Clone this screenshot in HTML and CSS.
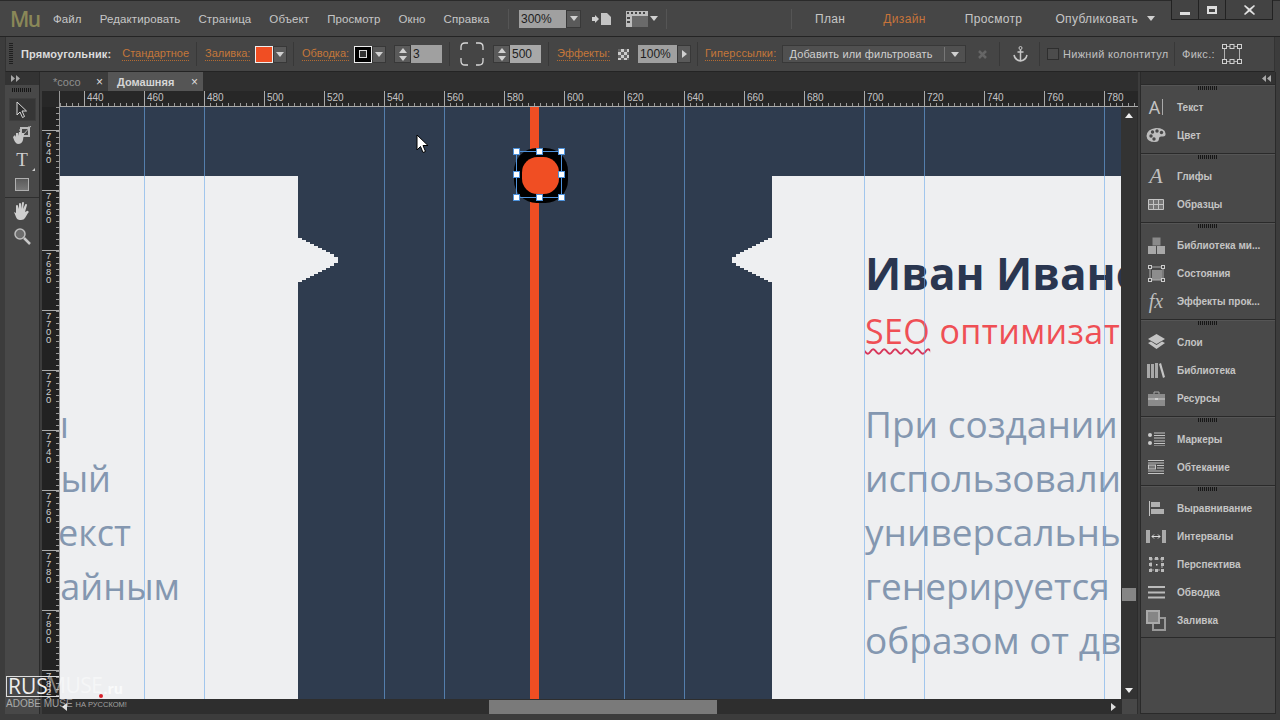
FILE: index.html
```html
<!DOCTYPE html>
<html lang="ru">
<head>
    <meta charset="UTF-8">
    <title>Adobe Muse</title>
    <link rel="stylesheet" href="styles.css">
</head>
<body>
<div class="app">
    <div class="menubar">
        <div class="logo">Mu</div>
        <nav class="menu">
            <span>Файл</span><span>Редактировать</span><span>Страница</span><span>Объект</span><span>Просмотр</span><span>Окно</span><span>Справка</span>
        </nav>
        <div class="sep sep-zoom"></div>
        <div class="field zoom-field">300%</div>
        <div class="drop"><i class="tri"></i></div>
        <svg class="ico page-ico" width="20" height="14" viewBox="0 0 20 14"><path d="M0 5h3V3l4 4-4 4V9H0z" fill="#d0d0d0"/><path d="M9 1h6l4 4v8H9z" fill="#c4c4c4"/></svg>
        <svg class="ico film-ico" width="22" height="16" viewBox="0 0 22 16"><rect width="22" height="16" fill="#bdbdbd"/><rect x="6" y="5" width="16" height="11" fill="#6a6a6a"/><path d="M1 1h2v2H1zM5 1h2v2H5zM9 1h2v2H9zM13 1h2v2h-2zM17 1h2v2h-2zM1 6h3v2H1zM1 10h3v2H1z" fill="#444"/></svg>
        <i class="tri tri-film"></i>
        <div class="sep sep-a"></div>
        <div class="sep sep-b"></div>
        <nav class="modes">
            <span class="mode-plan">План</span><span class="mode-design">Дизайн</span><span class="mode-view">Просмотр</span><span class="mode-pub">Опубликовать</span>
        </nav>
        <i class="tri tri-pub"></i>
        <div class="winbtns">
            <div class="winbtn"><i class="win-min"></i></div>
            <div class="winbtn"><i class="win-max"></i></div>
            <div class="winbtn winbtn-close">
                <svg width="11" height="10" viewBox="0 0 11 10"><path d="M1 0l4.500 3.500L10 0l1 1-4 4 4 4-1 1-4.500-3.500L1 10 0 9l4-4-4-4z" fill="#e0e0e0"/></svg>
            </div>
        </div>
    </div>

    <div class="controlbar">
        <div class="cgroup cg-1">
            <div class="grip-v"></div>
            <b class="ctl-title">Прямоугольник:</b>
            <span class="link">Стандартное</span>
        </div>
        <div class="cgroup cg-2">
            <span class="link">Заливка:</span>
            <div class="swatch swatch-fill"></div>
            <div class="drop small"><i class="tri"></i></div>
        </div>
        <div class="cgroup cg-3">
            <span class="link">Обводка:</span>
            <div class="swatch swatch-stroke"><i></i></div>
            <div class="drop small"><i class="tri"></i></div>
            <div class="stepper"><i class="tri tri-up"></i><i class="tri"></i></div>
            <div class="field stroke-field">3</div>
        </div>
        <div class="cgroup cg-4">
            <svg class="corners" width="24" height="24" viewBox="0 0 24 24"><path d="M1 8V5q0-4 4-4h3M16 1h3q4 0 4 4v3M23 16v3q0 4-4 4h-3M8 23H5q-4 0-4-4v-3" fill="none" stroke="#d8d8d8" stroke-width="1.300"/></svg>
            <div class="stepper"><i class="tri tri-up"></i><i class="tri"></i></div>
            <div class="field radius-field">500</div>
        </div>
        <div class="cgroup cg-5">
            <span class="link">Эффекты:</span>
            <div class="checker"></div>
            <div class="field opacity-field">100%</div>
            <div class="drop small arrow-right"><i class="tri tri-right"></i></div>
        </div>
        <div class="cgroup cg-6">
            <span class="link">Гиперссылки:</span>
            <div class="select"><span>Добавить или фильтровать</span><i class="select-bar"></i><i class="tri"></i></div>
            <svg class="clear-x" width="9" height="9" viewBox="0 0 9 9"><path d="M1 1l7 7M8 1L1 8" stroke="#666" stroke-width="2.500"/></svg>
        </div>
        <div class="cgroup cg-7">
            <svg width="15" height="16" viewBox="0 0 15 16"><circle cx="7.500" cy="2" r="1.500" fill="none" stroke="#c8c8c8"/><path d="M7.500 3.500V15M4.500 6h6M1 9q1 5 6.500 6Q13 14 14 9" fill="none" stroke="#c8c8c8" stroke-width="1.500"/></svg>
        </div>
        <div class="cgroup cg-8">
            <div class="checkbox"></div>
            <span class="ctl-text">Нижний колонтитул</span>
        </div>
        <div class="cgroup cg-9">
            <span class="ctl-text">Фикс.:</span>
            <svg class="pin-ico" width="20" height="20" viewBox="0 0 20 20"><path d="M2.500 2.500h15M2.500 17.500h15M2.500 2.500v15M17.500 2.500v15" stroke="#b0b0b0" fill="none"/><g fill="#444" stroke="#d0d0d0"><rect x=".5" y=".5" width="4" height="4"/><rect x="8" y=".5" width="4" height="4"/><rect x="15.500" y=".5" width="4" height="4"/><rect x=".5" y="15.500" width="4" height="4"/><rect x="8" y="15.500" width="4" height="4"/><rect x="15.500" y="15.500" width="4" height="4"/></g></svg>
        </div>
    </div>

    <div class="workspace">
        <aside class="toolbar">
            <div class="strip strip-left">
                <svg width="9" height="7" viewBox="0 0 9 7"><path d="M0 0l4 3.500L0 7zM5 0l4 3.500L5 7z" fill="#a8a8a8"/></svg>
            </div>
            <div class="grip-h"></div>
            <div class="tool tool-active">
                <svg width="12" height="18" viewBox="0 0 12 18"><path d="M1 1v13l3-3 2.500 5.500 2-1L6 10h4.500z" fill="#2c2c2c" stroke="#d8d8d8"/></svg>
            </div>
            <div class="tool">
                <svg width="20" height="20" viewBox="0 0 20 20"><path d="M9 3h8v8H9z" fill="none" stroke="#bbb" stroke-width="2"/><path d="M7 5h2M17 1v2M19 1l-8 9" stroke="#bbb"/><path d="M1 12l2-2 1 2 0-4 2 0 0 3 1-4 2 0 0 4 1-3 2 0-1 7q-1 4-5 4-3 0-5-7z" fill="#c8c8c8"/></svg>
            </div>
            <div class="tool tool-t"><span>T</span><i class="corner-mark"></i></div>
            <div class="tool"><div class="tool-rect"></div></div>
            <div class="tool-sep"></div>
            <div class="tool">
                <svg width="18" height="18" viewBox="0 0 18 18"><path d="M3 2v0M1 10l2 1 0-7a1 1 0 012 0l1 3V2a1 1 0 012 0v5l1-6a1 1 0 012 0l-1 6 2-4a1 1 0 012 0l-2 7 2-1a1 1 0 011 2l-3 5q-1 2-4 2H7q-3 0-4-3z" fill="#cfcfcf"/></svg>
            </div>
            <div class="tool">
                <svg width="18" height="18" viewBox="0 0 18 18"><circle cx="7" cy="7" r="5" fill="#6d6d6d" stroke="#bdbdbd" stroke-width="1.500"/><path d="M11 11l6 6" stroke="#c8c8c8" stroke-width="2.500"/></svg>
            </div>
        </aside>

        <main class="doc">
            <div class="tabs">
                <div class="tab tab-coco"><span>*coco</span><i class="tab-x">×</i></div>
                <div class="tab tab-home"><b>Домашняя</b><i class="tab-x">×</i></div>
            </div>
            <div class="ruler-row">
                <div class="ruler-corner"></div>
                <div class="ruler-top">
                    <span>440</span><span>460</span><span>480</span><span>500</span><span>520</span><span>540</span><span>560</span><span>580</span><span>600</span><span>620</span><span>640</span><span>660</span><span>680</span><span>700</span><span>720</span><span>740</span><span>760</span><span>780</span>
                </div>
            </div>
            <div class="canvas-row">
                <div class="ruler-left">
                    <span>7640</span><span>7660</span><span>7680</span><span>7700</span><span>7720</span><span>7740</span><span>7760</span><span>7780</span><span>7800</span><span>7820</span>
                </div>
                <div class="canvas">
                    <div class="card card-left">
                        <div class="old-line w-1">ы</div>
                        <div class="old-line w-2">ный</div>
                        <div class="old-line w-3">текст</div>
                        <div class="old-line w-4">случайным</div>
                    </div>
                    <div class="card card-right">
                        <h1>Иван Иванов</h1>
                        <h2><span class="misspelt">SEO</span> оптимизатор</h2>
                        <p>При создании</p>
                        <p>использовали</p>
                        <p>универсальный</p>
                        <p>генерируется</p>
                        <p>образом от двух</p>
                    </div>
                    <div class="notch notch-left"></div>
                    <div class="notch notch-right"></div>
                    <div class="orange-bar"></div>

                    <i class="guide" style="left:84px"></i>
                    <i class="guide" style="left:144px"></i>
                    <i class="guide" style="left:324px"></i>
                    <i class="guide" style="left:384px"></i>
                    <i class="guide" style="left:564px"></i>
                    <i class="guide" style="left:624px"></i>
                    <i class="guide" style="left:804px"></i>
                    <i class="guide" style="left:864px"></i>
                    <i class="guide" style="left:1044px"></i>

                    <div class="node">
                        <div class="node-dot"></div>
                        <div class="sel-box">
                            <i class="h h-tl"></i><i class="h h-tc"></i><i class="h h-tr"></i>
                            <i class="h h-ml"></i><i class="h h-mr"></i>
                            <i class="h h-bl"></i><i class="h h-bc"></i><i class="h h-br"></i>
                        </div>
                    </div>
                    <svg class="cursor" width="13" height="20" viewBox="0 0 13 20"><path d="M1 1v15l3.500-3.500 2.500 6 2.500-1-2.500-6H12z" fill="#fff" stroke="#000"/></svg>
                </div>
                <div class="vscroll">
                    <i class="tri tri-up white"></i>
                    <div class="vthumb"></div>
                    <i class="tri white"></i>
                </div>
            </div>
            <div class="hscroll">
                <i class="tri tri-left white"></i>
                <div class="hthumb"></div>
                <i class="tri tri-right white"></i>
                <div class="scroll-corner"></div>
            </div>
        </main>

        <aside class="panels">
            <div class="strip strip-right">
                <svg width="9" height="7" viewBox="0 0 9 7"><path d="M4 0L0 3.500 4 7zM9 0L5 3.500 9 7z" fill="#a8a8a8"/></svg>
            </div>
            <section class="pgroup">
                <div class="grip-h"></div>
                <div class="pitem"><div class="pico"><span class="ico-a">A</span><i class="ico-caret"></i></div><span>Текст</span></div>
                <div class="pitem"><div class="pico"><svg width="20" height="16" viewBox="0 0 20 16"><path d="M10 1q9 0 9.500 5.500Q20 10 16 9.500 13 9 13 11.500 13 15 9 15 1 15 .5 9 1 2 10 1z" fill="#bdbdbd"/><g fill="#484848"><circle cx="5" cy="9" r="1.700"/><circle cx="6.500" cy="5" r="1.700"/><circle cx="11" cy="4" r="1.700"/><circle cx="15.500" cy="5.500" r="1.700"/><circle cx="8" cy="12" r="1.700"/></g></svg></div><span>Цвет</span></div>
            </section>
            <section class="pgroup">
                <div class="grip-h"></div>
                <div class="pitem"><div class="pico"><span class="ico-glyph">A</span></div><span>Глифы</span></div>
                <div class="pitem"><div class="pico"><svg width="16" height="11" viewBox="0 0 16 11"><path d="M.5.500h15v10H.500zM.5 5.500h15M5.500.500v10M10.500.500v10" fill="#777" stroke="#c4c4c4"/></svg></div><span>Образцы</span></div>
            </section>
            <section class="pgroup">
                <div class="grip-h"></div>
                <div class="pitem"><div class="pico"><svg width="17" height="17" viewBox="0 0 17 17"><path d="M4.500.500h8v8h-8z" fill="#8a8a8a"/><path d="M0 9h8v8H0zM9 9h8v8H9z" fill="#a8a8a8"/></svg></div><span>Библиотека ми...</span></div>
                <div class="pitem"><div class="pico"><svg width="17" height="17" viewBox="0 0 17 17"><rect x="4" y="5" width="10" height="10" fill="#8d8d8d"/><path d="M2 2h13v13H2z" fill="none" stroke="#aaa"/><g fill="#484848" stroke="#ccc"><rect x=".5" y=".5" width="3" height="3"/><rect x="13.500" y=".5" width="3" height="3"/><rect x=".5" y="13.500" width="3" height="3"/><rect x="13.500" y="13.500" width="3" height="3"/></g></svg></div><span>Состояния</span></div>
                <div class="pitem"><div class="pico"><span class="ico-fx">fx</span></div><span>Эффекты прок...</span></div>
            </section>
            <section class="pgroup">
                <div class="grip-h"></div>
                <div class="pitem"><div class="pico"><svg width="17" height="16" viewBox="0 0 17 16"><path d="M8.500 0L17 5l-8.500 5L0 5z" fill="#c4c4c4"/><path d="M0 9l3-1.500 5.500 3.500L14 7.500 17 9l-8.500 6z" fill="#c4c4c4"/></svg></div><span>Слои</span></div>
                <div class="pitem"><div class="pico"><svg width="18" height="15" viewBox="0 0 18 15"><path d="M0 1h3v14H0zM4 1h3v14H4zM8 0h3v15H8z" fill="#a8a8a8"/><path d="M12 1l2-1 4 14-2 1z" fill="#c4c4c4"/></svg></div><span>Библиотека</span></div>
                <div class="pitem"><div class="pico"><svg width="17" height="15" viewBox="0 0 17 15"><path d="M6 3V1h5v2" fill="none" stroke="#aaa"/><rect y="3" width="17" height="12" fill="#8b8b8b"/><path d="M0 8h17" stroke="#ccc"/><rect x="7" y="7" width="3" height="2" fill="#ccc"/></svg></div><span>Ресурсы</span></div>
            </section>
            <section class="pgroup">
                <div class="grip-h"></div>
                <div class="pitem"><div class="pico"><svg width="17" height="14" viewBox="0 0 17 14"><circle cx="2" cy="3" r="2" fill="#ccc"/><circle cx="2" cy="11" r="2" fill="#ccc"/><path d="M6 1h11M6 3.500h11M6 6h11M6 9h11M6 11.500h11M6 14h11" stroke="#c4c4c4"/></svg></div><span>Маркеры</span></div>
                <div class="pitem"><div class="pico"><svg width="16" height="14" viewBox="0 0 16 14"><path d="M0 .5h16M0 3h16M9 5.500h7M9 8h7M0 11h16M0 13.500h16" stroke="#c4c4c4"/><rect x=".5" y="5" width="7" height="4" fill="#777" stroke="#c4c4c4"/></svg></div><span>Обтекание</span></div>
            </section>
            <section class="pgroup">
                <div class="grip-h"></div>
                <div class="pitem"><div class="pico"><svg width="15" height="15" viewBox="0 0 15 15"><path d="M.5 0v15" stroke="#c4c4c4"/><rect x="2" y="1" width="9" height="5" fill="#b0b0b0"/><rect x="2" y="8" width="13" height="5" fill="#b0b0b0"/></svg></div><span>Выравнивание</span></div>
                <div class="pitem"><div class="pico"><svg width="20" height="13" viewBox="0 0 20 13"><rect width="4" height="13" fill="#aaa"/><rect x="16" width="4" height="13" fill="#aaa"/><path d="M6 6.500h8M6 6.500l2-2M6 6.500l2 2M14 6.500l-2-2M14 6.500l-2 2" stroke="#ddd" fill="none"/></svg></div><span>Интервалы</span></div>
                <div class="pitem"><div class="pico"><svg width="15" height="15" viewBox="0 0 15 15"><rect x="2" y="2" width="11" height="11" fill="none" stroke="#aaa" stroke-dasharray="2 1"/><g fill="#bbb"><rect width="3" height="3"/><rect x="12" width="3" height="3"/><rect y="12" width="3" height="3"/><rect x="12" y="12" width="3" height="3"/><rect x="6" width="3" height="3"/><rect x="6" y="12" width="3" height="3"/><rect y="6" width="3" height="3"/><rect x="12" y="6" width="3" height="3"/></g><rect x="7" y="7" width="1.500" height="1.500" fill="#ddd"/></svg></div><span>Перспектива</span></div>
                <div class="pitem"><div class="pico"><svg width="17" height="13" viewBox="0 0 17 13"><path d="M0 1h17M0 6.500h17M0 11.500h17" stroke="#bbb" stroke-width="2"/></svg></div><span>Обводка</span></div>
                <div class="pitem"><div class="pico"><svg width="20" height="21" viewBox="0 0 20 21"><rect x="7" y="8" width="12" height="12" fill="none" stroke="#999" stroke-width="2"/><rect x="1" y="1" width="12" height="12" fill="#868686" stroke="#aaa" stroke-width="2"/></svg></div><span>Заливка</span></div>
            </section>
        </aside>
    </div>

    <div class="watermark">
        <div class="wm-box"><span class="wm-rus">RUS</span><span class="wm-muse">MUSE</span><span class="wm-ru">.ru</span></div>
        <div class="wm-sub"><span>ADOBE MUSE</span> <small>НА РУССКОМ!</small></div>
        <i class="wm-dot"></i>
    </div>
</div>
</body>
</html>
```
FILE: styles.css
```css
* {
    box-sizing: border-box;
}
body {
    margin: 0;
    background-color: #3d3d3d;
    font-family: "Liberation Sans", Arial, sans-serif;
    font-size: 11px;
    color: #c8c8c8;
}
i {
    display: block;
    font-style: normal;
}
.app {
    position: relative;
    width: 1280px;
    height: 720px;
    overflow: hidden;
    display: flex;
    flex-direction: column;
    background-color: #3c3c3c;
}

/* top menu */
.menubar {
    height: 37px;
    flex: none;
    display: flex;
    align-items: center;
    position: relative;
    background-color: #464646;
    border-top: 1px solid #2a2a2a;
    border-bottom: 1px solid #242424;
}
.logo {
    margin-left: 10px;
    width: 43px;
    flex: none;
    font-family: "Open Sans", sans-serif;
    font-size: 21px;
    font-weight: 600;
    letter-spacing: -1.500px;
    color: #8a8858;
}
.menu {
    width: 439px;
    flex: none;
    display: flex;
    gap: 18px;
    font-size: 11.500px;
    letter-spacing: 0.100px;
    color: #c6c6c6;
}
.sep {
    width: 1px;
    height: 20px;
    background-color: #333;
    border-right: 1px solid #555;
}
.sep-zoom {
    margin-left: 16px;
}
.field {
    height: 18px;
    display: flex;
    align-items: center;
    padding-left: 2px;
    background-color: #a0a0a0;
    color: #1e1e1e;
    font-size: 12px;
}
.zoom-field {
    margin-left: 10px;
    width: 47px;
}
.drop {
    width: 15px;
    height: 18px;
    background-color: #5a5a5a;
    display: flex;
    align-items: center;
    justify-content: center;
    border: 1px solid #383838;
}
.drop.small {
    width: 14px;
    height: 17px;
}
.tri {
    width: 0;
    height: 0;
    border-left: 4px solid transparent;
    border-right: 4px solid transparent;
    border-top: 5px solid #d0d0d0;
}
.tri-up {
    border-top: 0;
    border-bottom: 5px solid #d0d0d0;
}
.tri-right {
    border-right: 0;
    border-top: 4px solid transparent;
    border-bottom: 4px solid transparent;
    border-left: 5px solid #d0d0d0;
}
.tri-left {
    border-left: 0;
    border-top: 4px solid transparent;
    border-bottom: 4px solid transparent;
    border-right: 5px solid #d0d0d0;
}
.tri.white {
    border-top-color: #eee;
}
.tri-up.white {
    border-top-color: transparent;
    border-bottom-color: #eee;
}
.tri-right.white {
    border-top-color: transparent;
    border-left-color: #ddd;
}
.tri-left.white {
    border-top-color: transparent;
    border-right-color: #ddd;
}
.page-ico {
    margin-left: 11px;
}
.film-ico {
    margin-left: 14px;
}
.tri-film {
    margin-left: 2px;
}
.sep-a {
    margin-left: 8px;
}
.sep-b {
    margin-left: 124px;
}
.modes {
    display: flex;
    font-size: 12px;
    letter-spacing: 0.350px;
    color: #c6c6c6;
}
.mode-plan {
    margin-left: 23px;
}
.mode-design {
    margin-left: 38px;
    color: #c8743a;
}
.mode-view {
    margin-left: 39px;
}
.mode-pub {
    margin-left: 33px;
}
.tri-pub {
    margin-left: 9px;
}
.winbtns {
    position: absolute;
    right: 7px;
    top: -1px;
    height: 20px;
    width: 102px;
    display: flex;
    background-color: #434343;
    border: 1px solid #222;
    border-top: 0;
}
.winbtn {
    width: 27px;
    display: flex;
    align-items: center;
    justify-content: center;
    border-right: 1px solid #222;
}
.winbtn-close {
    flex: 1;
    border-right: 0;
}
.win-min {
    width: 10px;
    height: 3px;
    margin-top: 7px;
    background-color: #ddd;
}
.win-max {
    width: 10px;
    height: 8px;
    border: 2px solid #ddd;
    border-top-width: 3px;
}

/* control strip */
.controlbar {
    height: 35px;
    flex: none;
    margin: 0 5px;
    display: flex;
    align-items: center;
    background-color: #454545;
    border-bottom: 1px solid #242424;
    border-left: 1px solid #333;
    border-right: 1px solid #333;
    font-size: 11px;
}
.cgroup {
    height: 24px;
    display: flex;
    align-items: center;
    flex: none;
    border-right: 1px solid #383838;
}
.cg-1 { width: 191px; }
.cg-2 { width: 97px; padding-left: 8px; }
.cg-3 { width: 156px; padding-left: 8px; }
.cg-4 { width: 99px; padding-left: 10px; }
.cg-5 { width: 149px; padding-left: 8px; }
.cg-6 { width: 302px; padding-left: 7px; }
.cg-7 { width: 40px; padding-left: 13px; }
.cg-8 { width: 135px; padding-left: 7px; }
.cg-9 { flex: 1; padding-left: 7px; border-right: 0; }
.grip-v {
    width: 4px;
    height: 22px;
    margin-left: 3px;
    background-image: repeating-linear-gradient(#1f1f1f 0 1px, transparent 1px 2px);
}
.ctl-title {
    margin-left: 8px;
    color: #dcdcdc;
    letter-spacing: 0.100px;
}
.link {
    margin-left: 11px;
    color: #c4773a;
    border-bottom: 1px dotted #b56b32;
    line-height: 13px;
}
.cg-2 .link, .cg-3 .link, .cg-5 .link, .cg-6 .link {
    margin-left: 0;
}
.cg-6 .link {
    letter-spacing: 0.200px;
}
.swatch {
    width: 18px;
    height: 17px;
    margin-left: 5px;
    border: 1px solid #eee;
}
.swatch-fill {
    background-color: #f04e23;
}
.swatch-stroke {
    background-color: #000;
    display: flex;
    align-items: center;
    justify-content: center;
}
.swatch-stroke i {
    width: 8px;
    height: 8px;
    border: 1px solid #ddd;
    background-color: #333;
}
.stepper {
    width: 17px;
    height: 18px;
    margin-left: 8px;
    display: flex;
    flex-direction: column;
    align-items: center;
    justify-content: space-around;
    background-color: #5a5a5a;
    border: 1px solid #383838;
}
.stroke-field {
    width: 31px;
}
.corners {
    flex: none;
}
.cg-4 .stepper {
    margin-left: 9px;
}
.radius-field {
    width: 31px;
    background-color: #a8a8a8;
    color: #222;
}
.checker {
    width: 11px;
    height: 11px;
    margin-left: 8px;
    background-image: conic-gradient(#ccc 25%, #666 0 50%, #ccc 0 75%, #666 0);
    background-size: 6px 6px;
}
.opacity-field {
    width: 39px;
    margin-left: 9px;
}
.arrow-right {
    height: 18px !important;
}
.select {
    width: 184px;
    height: 18px;
    margin-left: 6px;
    padding: 0 6px;
    display: flex;
    align-items: center;
    background-color: #505050;
    border: 1px solid #383838;
    color: #cfcfcf;
    letter-spacing: 0.150px;
}
.select span {
    flex: 1;
}
.select-bar {
    width: 1px;
    height: 14px;
    margin-right: 6px;
    background-color: #777;
}
.clear-x {
    margin-left: 12px;
}
.checkbox {
    width: 12px;
    height: 12px;
    background-color: #4c4c4c;
    border: 1px solid #2e2e2e;
}
.ctl-text {
    margin-left: 4px;
    color: #c0c0c0;
    letter-spacing: 0.300px;
}
.cg-9 .ctl-text {
    margin-left: 0;
}
.pin-ico {
    margin-left: 7px;
}

/* workspace */
.workspace {
    flex: 1;
    min-height: 0;
    display: flex;
    padding: 0 5px 6px;
}
.strip {
    height: 13px;
    display: flex;
    align-items: center;
    background-color: #333;
}
.strip-left {
    padding-left: 6px;
}
.strip-right {
    justify-content: flex-end;
    padding-right: 4px;
    margin-bottom: -1px;
}
.grip-h {
    width: 20px;
    height: 4px;
    margin: 3px auto 0;
    background-image: repeating-linear-gradient(90deg, #161616 0 1px, transparent 1px 2px);
}
.toolbar {
    width: 35px;
    flex: none;
    margin-right: 2px;
    background-color: #484848;
    border-right: 1px solid #2a2a2a;
    display: flex;
    flex-direction: column;
    align-items: center;
}
.toolbar .strip {
    width: 100%;
}
.toolbar .grip-h {
    margin-bottom: 6px;
}
.tool {
    width: 27px;
    height: 25px;
    flex: none;
    display: flex;
    align-items: center;
    justify-content: center;
    position: relative;
}
.tool-active {
    height: 23px;
    margin-bottom: 1px;
    background-color: #363636;
    border: 1px solid #3e3e3e;
}
.tool-t span {
    font-family: "Liberation Serif", serif;
    font-size: 19px;
    color: #cfcfcf;
}
.corner-mark {
    position: absolute;
    right: 1px;
    bottom: 1px;
    border-left: 3px solid transparent;
    border-bottom: 3px solid #ccc;
}
.tool-rect {
    width: 14px;
    height: 13px;
    background-image: linear-gradient(#5a5a5a, #777);
    border: 1px solid #b0b0b0;
}
.tool-sep {
    width: 100%;
    height: 1px;
    background-color: #2e2e2e;
}

/* document */
.doc {
    width: 1096px;
    flex: none;
    display: flex;
    flex-direction: column;
    background-color: #2c2c2c;
}
.tabs {
    height: 19px;
    flex: none;
    display: flex;
    background-color: #2f2f2f;
}
.tab {
    height: 19px;
    display: flex;
    align-items: center;
    padding-left: 11px;
}
.tab-coco {
    width: 66px;
    background-color: #3c3c3c;
    color: #8f8f8f;
}
.tab-home {
    width: 95px;
    padding-left: 9px;
    background-color: #555;
    color: #d6d6d6;
}
.tab-x {
    margin-left: auto;
    margin-right: 5px;
    font-size: 12px;
    color: #ddd;
    line-height: 12px;
}
.ruler-row {
    height: 16px;
    flex: none;
    display: flex;
    background-color: #272727;
}
.ruler-corner {
    width: 18px;
    flex: none;
    border-right: 1px solid #999;
}
.ruler-top {
    flex: 1;
    min-width: 0;
    display: flex;
    overflow: hidden;
    padding-left: 24px;
    font-size: 10px;
    color: #c4c4c4;
    border-bottom: 1px solid #aaa;
    background-image: repeating-linear-gradient(90deg, #999 0 1px, transparent 1px 6px);
    background-size: 100% 3px;
    background-repeat: no-repeat;
    background-position: 0 100%;
}
.ruler-top span {
    width: 60px;
    flex: none;
    padding: 1px 0 0 2px;
    border-left: 1px solid #aaa;
}
.canvas-row {
    height: 592px;
    flex: none;
    display: flex;
}
.ruler-left {
    width: 18px;
    flex: none;
    padding-top: 23px;
    background-color: #222;
    border-right: 1px solid #999;
    font-size: 9.500px;
    line-height: 8px;
    color: #cfcfcf;
    background-image: repeating-linear-gradient(#999 0 1px, transparent 1px 6px);
    background-size: 3px 100%;
    background-repeat: no-repeat;
    background-position: 100% 0;
}
.ruler-left span {
    display: block;
    height: 60px;
    padding: 1px 7px 0 4px;
    border-top: 1px solid #aaa;
    word-break: break-all;
}
.canvas {
    position: relative;
    width: 1061px;
    flex: none;
    overflow: hidden;
    background-color: #2f3c4f;
    font-family: "Open Sans", sans-serif;
}
.card {
    position: absolute;
    top: 69px;
    bottom: 0;
    background-color: #eeeff1;
    overflow: hidden;
}
.card-left {
    left: 0;
    width: 238px;
}
.card-right {
    left: 712px;
    right: 0;
    padding-left: 93px;
    white-space: nowrap;
}
.old-line {
    height: 54px;
    display: flex;
    justify-content: flex-end;
    font-size: 36px;
    line-height: 54px;
    color: #8497b0;
    white-space: nowrap;
}
.old-line:first-child {
    margin-top: 222px;
}
.w-1 { width: 9px; }
.w-2 { width: 51px; }
.w-3 { width: 71px; }
.w-4 { width: 120px; }
.card-right h1 {
    margin: 69px 0 0;
    font-size: 44px;
    line-height: 56px;
    font-weight: 700;
    color: #2a3650;
}
.card-right h2 {
    margin: 8px 0 44px;
    font-size: 34px;
    line-height: 44px;
    font-weight: 400;
    letter-spacing: 0.400px;
    color: #ef4f55;
}
.misspelt {
    text-decoration: underline wavy #d8365a 2px;
    text-underline-offset: 4px;
}
.card-right p {
    margin: 0;
    font-size: 37px;
    line-height: 54px;
    color: #8497b0;
}
.notch {
    position: absolute;
    top: 131px;
    width: 40px;
    height: 44px;
    background-color: #eeeff1;
    /* the page is zoomed 300%, so the slope shows in steps */
    clip-path: polygon(0 0, 4px 0, 4px 2px, 8px 2px, 8px 4px, 12px 4px, 12px 6px, 16px 6px, 16px 8px, 20px 8px, 20px 10px, 24px 10px, 24px 12px, 28px 12px, 28px 14px, 32px 14px, 32px 16px, 36px 16px, 36px 19px, 40px 19px, 40px 25px, 36px 25px, 36px 28px, 32px 28px, 32px 30px, 28px 30px, 28px 32px, 24px 32px, 24px 34px, 20px 34px, 20px 36px, 16px 36px, 16px 38px, 12px 38px, 12px 40px, 8px 40px, 8px 42px, 4px 42px, 4px 44px, 0 44px);
}
.notch-left {
    left: 238px;
}
.notch-right {
    left: 672px;
    transform: scaleX(-1);
}
.orange-bar {
    position: absolute;
    top: 0;
    bottom: 0;
    left: 470px;
    width: 9px;
    background-color: #f04e23;
}
.guide {
    position: absolute;
    top: 0;
    bottom: 0;
    width: 1px;
    background-color: rgba(110, 170, 235, 0.6);
}
.node {
    position: absolute;
    left: 454px;
    top: 41px;
    width: 54px;
    height: 55px;
    background-color: #000;
    border-radius: 42%;
}
.node-dot {
    position: absolute;
    left: 8px;
    top: 9px;
    width: 37px;
    height: 37px;
    background-color: #f04e23;
    border-radius: 42%;
}
.sel-box {
    position: absolute;
    left: 2px;
    top: 3px;
    width: 46px;
    height: 47px;
    border: 1px solid #4f93dc;
}
.h {
    position: absolute;
    width: 7px;
    height: 7px;
    background-color: #fff;
    border: 1px solid #4f93dc;
}
.h-tl { left: -4px; top: -4px; }
.h-tc { left: 19px; top: -4px; }
.h-tr { right: -4px; top: -4px; }
.h-ml { left: -4px; top: 19px; }
.h-mr { right: -4px; top: 19px; }
.h-bl { left: -4px; bottom: -4px; }
.h-bc { left: 19px; bottom: -4px; }
.h-br { right: -4px; bottom: -4px; }
.cursor {
    position: absolute;
    left: 356px;
    top: 27px;
}
.vscroll {
    width: 16px;
    flex: none;
    position: relative;
    display: flex;
    flex-direction: column;
    align-items: center;
    justify-content: space-between;
    padding: 6px 0;
    background-color: #333;
}
.vthumb {
    position: absolute;
    top: 481px;
    left: 1px;
    width: 14px;
    height: 13px;
    background-color: #858585;
}
.hscroll {
    height: 15px;
    flex: none;
    position: relative;
    display: flex;
    align-items: center;
    justify-content: space-between;
    padding: 0 22px 0 20px;
    background-color: #2e2e2e;
}
.hthumb {
    position: absolute;
    left: 447px;
    top: 1px;
    width: 228px;
    height: 14px;
    background-color: #7a7a7a;
}
.scroll-corner {
    position: absolute;
    right: 1px;
    top: 0;
    width: 15px;
    height: 15px;
    background-color: #474747;
}

/* right panels */
.panels {
    width: 136px;
    flex: none;
    margin-left: 2px;
    display: flex;
    flex-direction: column;
    background-color: #494949;
    border-left: 1px solid #2a2a2a;
    border-right: 1px solid #2a2a2a;
    border-bottom: 1px solid #2a2a2a;
}
.pgroup {
    height: 69px;
    flex: none;
    padding-bottom: 4px;
    border-top: 1px solid #2a2a2a;
    box-shadow: inset 0 1px 0 #555;
}
.pgroup:nth-of-type(3), .pgroup:nth-of-type(4) {
    height: 97px;
}
.pgroup:nth-of-type(6) {
    height: 153px;
    border-bottom: 1px solid #2a2a2a;
}
.pgroup .grip-h {
    height: 4px;
    margin: 1px auto 3px;
}
.pitem {
    height: 28px;
    display: flex;
    align-items: center;
    font-size: 10px;
    font-weight: 700;
    color: #c4c4c4;
}
.pico {
    width: 36px;
    flex: none;
    display: flex;
    align-items: center;
    justify-content: center;
    padding-right: 6px;
    position: relative;
}
.ico-a {
    font-family: "Open Sans", sans-serif;
    font-size: 18px;
    font-weight: 400;
    color: #c4c4c4;
    line-height: 18px;
}
.ico-caret {
    width: 1px;
    height: 16px;
    margin-left: 2px;
    background-color: #aaa;
}
.ico-glyph {
    font-family: "Liberation Serif", serif;
    font-style: italic;
    font-size: 22px;
    font-weight: 400;
    line-height: 20px;
    color: #c0c0c0;
}
.ico-fx {
    font-family: "Liberation Serif", serif;
    font-style: italic;
    font-size: 20px;
    font-weight: 400;
    line-height: 20px;
    color: #bdbdbd;
}

/* channel watermark */
.watermark {
    position: absolute;
    left: 6px;
    top: 676px;
    width: 120px;
    color: #fff;
}
.wm-box {
    height: 21px;
    font-family: "Open Sans", sans-serif;
    font-size: 21px;
    line-height: 19px;
    white-space: nowrap;
    display: flex;
}
.wm-rus {
    padding-left: 1px;
    border: 1px solid #ddd;
    border-right: 0;
    width: 53px;
    flex: none;
    color: #eee;
}
.wm-muse {
    margin-left: -12px;
    letter-spacing: -0.500px;
    color: rgba(255, 255, 255, 0.45);
}
.wm-ru {
    margin-left: 1px;
    padding-top: 3px;
    font-size: 14px;
    font-weight: 700;
    color: rgba(255, 255, 255, 0.7);
}
.wm-sub {
    margin-top: 1px;
    font-size: 10px;
    line-height: 12px;
    white-space: nowrap;
    color: rgba(255, 255, 255, 0.55);
}
.wm-sub small {
    font-size: 7.500px;
}
.wm-dot {
    position: absolute;
    left: 93px;
    top: 18px;
    width: 4px;
    height: 4px;
    border-radius: 50%;
    background-color: #d8202a;
}
```
